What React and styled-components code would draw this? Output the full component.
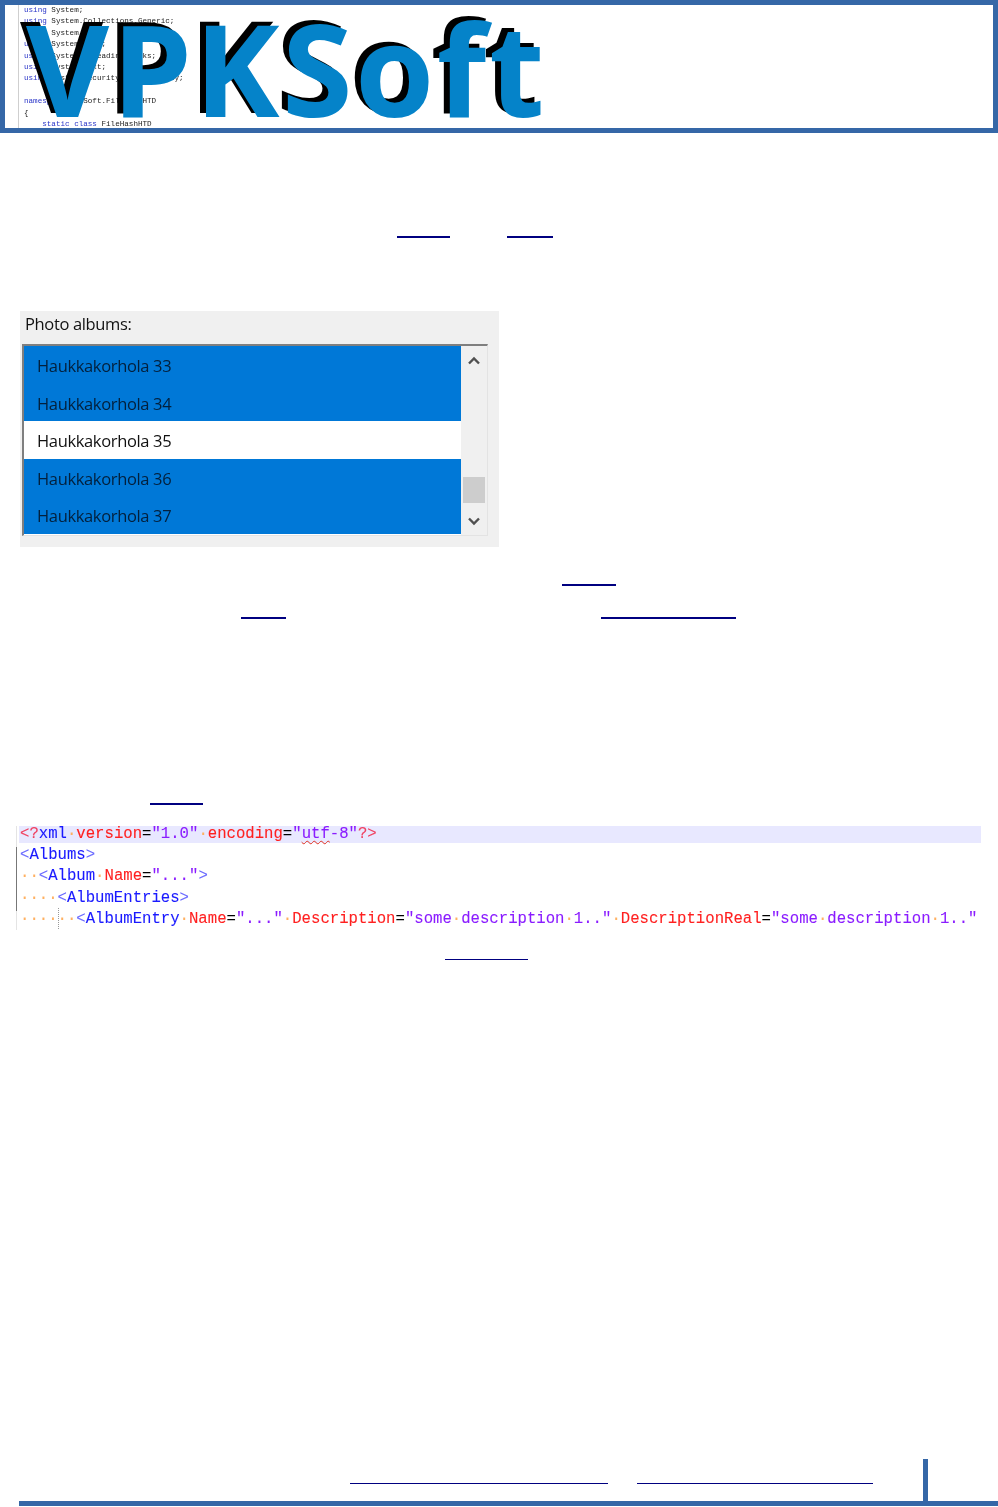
import React from 'react'
import styled, { createGlobalStyle } from 'styled-components'

const GlobalStyle = createGlobalStyle`
  html, body {
    margin: 0;
    padding: 0;
    background: #fff;
  }
`

const Page = styled.div`
  width: 998px;
  height: 1507px;
  display: flex;
  flex-direction: column;
  overflow: hidden;
  background: #fff;
`

const Banner = styled.header`
  position: relative;
  box-sizing: border-box;
  height: 133px;
  border: 5px solid #3567a7;
  overflow: hidden;
  background: #fff;
`

const SourceCode = styled.pre`
  margin: 0 0 0 13px;
  padding: 0 0 0 5px;
  border-left: 1px solid #cfcfcf;
  font-family: "Liberation Mono", monospace;
  font-size: 7.6px;
  line-height: 11.4px;
  color: #222;
  filter: blur(0.6px);
`

const Kw = styled.span`
  color: #2a35c8;
`

const Wordmark = styled.div`
  position: absolute;
  left: 21px;
  top: 5px;
  font-family: "Open Sans", sans-serif;
  font-weight: 700;
  font-size: 128px;
  line-height: 116px;
  letter-spacing: 2.5px;
  color: #0583c9;
  text-shadow: -6px -4px 0 #000;
  filter: blur(0.4px);
`

const LinkLine = styled.div`
  display: flex;
  height: 2px;
  margin-top: ${p => p.$top}px;
`

const LinkRule = styled.span`
  display: block;
  box-sizing: border-box;
  width: ${p => p.$w}px;
  height: ${p => p.$thin ? 1 : 2}px;
  margin-left: ${p => p.$left}px;
  background: #000080;
`

const AlbumPanel = styled.section`
  box-sizing: border-box;
  width: 479px;
  height: 236px;
  margin: 73px 0 0 20px;
  padding: 0 11px 0 2px;
  background: #f0f0f0;
  filter: blur(0.35px);
`

const PanelTitle = styled.div`
  height: 33px;
  padding-left: 3px;
  font-family: "Open Sans", sans-serif;
  font-size: 16.5px;
  line-height: 26px;
  letter-spacing: -0.35px;
  color: #111;
`

const ListBox = styled.div`
  display: flex;
  height: 192px;
  border-top: 2px solid #7f7f7f;
  border-left: 2px solid #7f7f7f;
  border-right: 1px solid #e3e3e3;
  border-bottom: 1px solid #e3e3e3;
  box-sizing: border-box;
`

const Rows = styled.div`
  width: 437px;
  flex: none;
  background: #fff;
`

const Row = styled.div`
  height: 37.6px;
  padding-left: 13px;
  font-family: "Open Sans", sans-serif;
  font-size: 16.5px;
  line-height: 39px;
  letter-spacing: -0.35px;
  background: ${p => p.$selected ? '#0078d7' : '#fff'};
  color: ${p => p.$selected ? '#03203c' : '#111'};
`

const ScrollBar = styled.div`
  flex: 1;
  display: flex;
  flex-direction: column;
  align-items: center;
  padding: 10px 0 0;
  background: #f0f0f0;
`

const ScrollThumb = styled.div`
  width: 22px;
  height: 26px;
  margin: 112px 0 14px;
  background: #cdcdcd;
`

const Chevron = ({ up }) => (
  <svg width="12" height="9" viewBox="0 0 12 9">
    <polyline
      points={up ? '1,7.5 6,2.5 11,7.5' : '1,1.5 6,6.5 11,1.5'}
      fill="none"
      stroke="#505050"
      strokeWidth="2.4"
    />
  </svg>
)

const CodeShot = styled.section`
  position: relative;
  box-sizing: border-box;
  width: 965px;
  height: 104px;
  margin: 21px 0 0 16px;
  border-left: 1px solid #e4e4e4;
  font-family: "Liberation Mono", monospace;
  font-size: 15.65px;
  white-space: pre;
  -webkit-text-stroke: 0.1px;
  filter: blur(0.4px);
`

const CodeLine = styled.div`
  box-sizing: border-box;
  height: 21.2px;
  line-height: 16px;
  padding-left: ${p => p.$active ? 1 : 3}px;
  margin-left: ${p => p.$active ? 2 : p.$marked ? -1 : 0}px;
  background: ${p => p.$active ? 'linear-gradient(#e8e8ff 17px, #fff 17px)' : 'transparent'};
  color: #000;
  border-left: ${p => p.$marked ? '1px solid #777' : 'none'};
`

const Tag = styled.span`
  color: #1a1aff;
`

const Bracket = styled.span`
  color: #6a6aff;
`

const Attr = styled.span`
  color: #ff2020;
`

const Value = styled.span`
  color: #8a1cff;
`

const Pi = styled.span`
  color: #f04060;
`

const Dot = styled.span`
  color: #ffb060;
`

const Squiggle = styled.span`
  text-decoration: underline wavy #e03020 1px;
  text-underline-offset: 2px;
`

const IndentGuide = styled.div`
  position: absolute;
  left: 41px;
  top: 82px;
  height: 21px;
  border-left: 1px dotted #999;
`

const Footer = styled.footer`
  margin-top: auto;
  display: flex;
  flex-direction: column;
`

const FooterRow = styled.div`
  display: flex;
  align-items: flex-end;
  height: 42px;
`

const FooterRule = styled(LinkRule)`
  margin-bottom: 17px;
`

const PageMark = styled.div`
  width: 5px;
  height: 42px;
  margin-left: 50px;
  background: #3567a7;
`

const FooterBar = styled.div`
  height: 5px;
  margin: 0 0 1px 19px;
  background: #3567a7;
`

const albums = [33, 34, 35, 36, 37]

const D = ({ n = 1 }) => <Dot>{'\u00b7'.repeat(n)}</Dot>

export default function App() {
  return (
    <Page>
      <GlobalStyle />
      <Banner>
        <SourceCode>
          <Kw>using</Kw> System;{'\n'}
          <Kw>using</Kw> System.Collections.Generic;{'\n'}
          <Kw>using</Kw> System.IO;{'\n'}
          <Kw>using</Kw> System.Linq;{'\n'}
          <Kw>using</Kw> System.Threading.Tasks;{'\n'}
          <Kw>using</Kw> System.Text;{'\n'}
          <Kw>using</Kw> System.Security.Cryptography;{'\n'}
          {'\n'}
          <Kw>namespace</Kw> VPKSoft.FileHashHTD{'\n'}
          {'{\n'}
          <Kw>    static class</Kw> FileHashHTD
        </SourceCode>
        <Wordmark>VPKSoft</Wordmark>
      </Banner>

      <LinkLine $top={103}>
        <LinkRule $left={397} $w={53} />
        <LinkRule $left={57} $w={46} />
      </LinkLine>

      <AlbumPanel>
        <PanelTitle>Photo albums:</PanelTitle>
        <ListBox>
          <Rows>
            {albums.map(n => (
              <Row key={n} $selected={n !== 35}>Haukkakorhola {n}</Row>
            ))}
          </Rows>
          <ScrollBar>
            <Chevron up />
            <ScrollThumb />
            <Chevron />
          </ScrollBar>
        </ListBox>
      </AlbumPanel>

      <LinkLine $top={37}>
        <LinkRule $left={562} $w={54} />
      </LinkLine>
      <LinkLine $top={31}>
        <LinkRule $left={241} $w={45} />
        <LinkRule $left={315} $w={135} />
      </LinkLine>
      <LinkLine $top={184}>
        <LinkRule $left={150} $w={53} />
      </LinkLine>

      <CodeShot>
        <CodeLine $active><Pi>{'<?'}</Pi><Tag>xml</Tag><D /><Attr>version</Attr>=<Value>"1.0"</Value><D /><Attr>encoding</Attr>=<Value>"<Squiggle>utf</Squiggle>-8"</Value><Pi>{'?>'}</Pi></CodeLine>
        <CodeLine $marked><Bracket>{'<'}</Bracket><Tag>Albums</Tag><Bracket>{'>'}</Bracket></CodeLine>
        <CodeLine $marked><D n={2} /><Bracket>{'<'}</Bracket><Tag>Album</Tag><D /><Attr>Name</Attr>=<Value>"..."</Value><Bracket>{'>'}</Bracket></CodeLine>
        <CodeLine $marked><D n={4} /><Bracket>{'<'}</Bracket><Tag>AlbumEntries</Tag><Bracket>{'>'}</Bracket></CodeLine>
        <CodeLine><D n={6} /><Bracket>{'<'}</Bracket><Tag>AlbumEntry</Tag><D /><Attr>Name</Attr>=<Value>"..."</Value><D /><Attr>Description</Attr>=<Value>"some<D />description<D />1.."</Value><D /><Attr>DescriptionReal</Attr>=<Value>"some<D />description<D />1.."</Value></CodeLine>
        <IndentGuide />
      </CodeShot>

      <LinkLine $top={29}>
        <LinkRule $left={445} $w={83} $thin />
      </LinkLine>

      <Footer>
        <FooterRow>
          <FooterRule $left={350} $w={258} $thin />
          <FooterRule $left={29} $w={236} $thin />
          <PageMark />
        </FooterRow>
        <FooterBar />
      </Footer>
    </Page>
  )
}
